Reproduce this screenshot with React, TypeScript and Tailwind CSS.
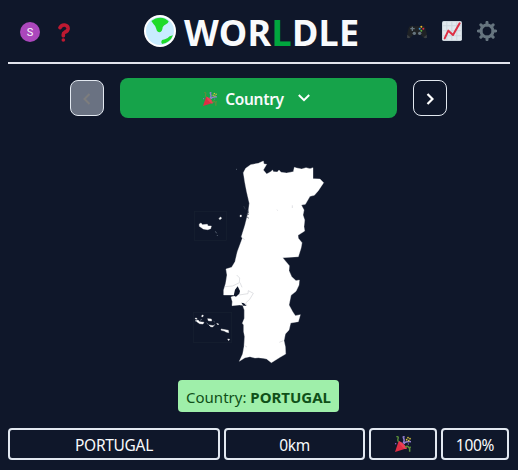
import React from "react";

function Popper({ className }: { className: string }) {
  return (
    <svg viewBox="0 0 48 48" className={className}>
      <path d="M0 48 11 15Q26 22 36 37Z" fill="#dd2e44" />
      <path d="M11 15Q26 20 36 37Q31 42 24 35Q13 26 11 15Z" fill="#ea3f56" />
      <path d="M4 2Q12 1 9 8Q7 14 11 17" stroke="#5c913b" strokeWidth="4" fill="none" />
      <path d="M24 21Q31 14 24 3M23 3 29 2M27 24Q30 15 48 17" stroke="#9580cf" strokeWidth="4.5" fill="none" />
      <path d="M31 35Q36 28 40 33Q42 38 47 32M44 36V47" stroke="#5c913b" strokeWidth="4.5" fill="none" />
      <g fill="#d9c43c"><circle cx="39" cy="5" r="2.5" /><circle cx="45" cy="8" r="2.5" /><circle cx="35" cy="11" r="2.5" /><circle cx="41" cy="14" r="2.5" /></g>
      <g fill="#9266cc"><circle cx="2" cy="23" r="2.3" /><circle cx="40" cy="24" r="2" /></g>
    </svg>
  );
}

function Globe() {
  return (
    <svg viewBox="0 0 96 96" className="h-8 w-8 shrink-0">
      <circle cx="48" cy="48" r="48" fill="#fff" />
      <circle cx="48" cy="48" r="42" fill="#c8ecff" />
      <path d="M22 18Q34 8 49 8Q65 9 74 19Q73 25 66 28Q59 31 56 37Q55 51 47 52Q38 51 37 42Q36 34 29 28Z" fill="#1fdb2a" />
      <path d="M87 61Q75 63 71 69Q63 73 54 75Q49 82 54 87Q78 84 87 61Z" fill="#1fdb2a" />
    </svg>
  );
}

function Gamepad() {
  return (
    <svg viewBox="0 0 60 42" className="mt-[2px] h-[14px] w-5">
      <path d="M6 6Q14 0 22 4H38Q47 0 54 6Q60 24 60 36Q58 42 50 38L41 29H19L10 38Q2 43 0 36Q0 22 6 6Z" fill="#1f2225" />
      <path d="M1 29 10 37 6 40 0 38ZM59 29 50 37 54 40 60 38Z" fill="#3b4045" />
      <path d="M16 5V18M10 11H23" stroke="#66757f" strokeWidth="4" />
      <circle cx="22" cy="25" r="5" fill="#66757f" />
      <circle cx="38" cy="25" r="5" fill="#66757f" />
      <circle cx="43" cy="5" r="3" fill="#e5b52b" />
      <circle cx="38" cy="11" r="3" fill="#3d91d1" />
      <circle cx="49" cy="11" r="3" fill="#dd2e44" />
      <circle cx="43" cy="17" r="3" fill="#58ab45" />
    </svg>
  );
}

function Chart() {
  return (
    <svg viewBox="0 0 60 60" className="h-5 w-5">
      <rect width="60" height="60" rx="5" fill="#ccd6dd" />
      <path d="M3 3H13V13H3ZM16 3H28V13H16ZM31 3H43V13H31ZM46 3H57V13H46ZM3 16H13V28H3ZM16 16H28V28H16ZM31 16H43V28H31ZM46 16H57V28H46ZM3 31H13V43H3ZM16 31H28V43H16ZM31 31H43V43H31ZM46 31H57V43H46ZM3 46H13V57H3ZM16 46H28V57H16ZM31 46H43V57H31ZM46 46H57V57H46Z" fill="#e1e8ed" />
      <path d="M8 52 19 29 33 42 53 7" fill="none" stroke="#dd2e44" strokeWidth="6" strokeLinecap="round" strokeLinejoin="round" />
    </svg>
  );
}

function Gear() {
  return (
    <svg viewBox="0 0 60 60" className="h-5 w-5">
      <path
        d="M30 4V12M30 48V56M4 30H12M48 30H56M11.6 11.6 17 17M43 43 48.4 48.4M48.4 11.6 43 17M17 43 11.6 48.4"
        stroke="#66757f"
        strokeWidth="9"
        strokeLinecap="round"
      />
      <circle cx="30" cy="30" r="18" fill="none" stroke="#66757f" strokeWidth="9" />
    </svg>
  );
}

function CountryMap() {
  return (
    <svg viewBox="0 0 480 660" className="h-[220px] w-40">
      <path
        d="M190 68 197 55 212 44 235 40 250 33 252 42 260 43 250 60 260 72 272 65 278 60 280 65 292 66 297 60 303 67 320 69 340 65 343 52 350 54 365 57 378 53 390 56 399 53 399 86 420 87 431 98 415 122 403 136 390 139 376 163 364 165 372 180 369 195 374 210 372 230 374 243 354 256 355 265 366 278 363 295 355 320 308 323 328 347 327 362 335 380 348 392 358 390 357 405 348 424 333 436 327 465 338 485 346 497 361 494 355 515 332 519 327 540 316 552 312 572 316 590 317 612 300 622 274 638 260 627 250 625 235 623 225 624 210 620 195 623 178 634 188 612 192 590 194 560 191 545 191 525 187 520 193 505 193 480 188 466 178 465 156 467 157 455 153 441 165 437 160 435 131 435 131 420 137 400 141 375 138 357 155 352 165 335 172 305 187 265 184 260 195 225 205 185 208 160 200 125 195 100Z"
        fill="#fff"
        stroke="#fff"
        strokeWidth="1"
      />
      <path d="M161 437 165 419 173 409 180 423 178 431 168 440ZM184 458 192 460 200 467 190 467Z" fill="#0f172a" />
      <path d="M135 410 158 408 178 398 179 384 170 375M180 398 186 412M177 435 204 431 205 422 220 430 209 448 197 459 200 467M298 577 310 572M194 587 201 591M337 166V174M291 179 293 182M187 264 194 269" fill="none" stroke="#d0d2d6" strokeWidth="2" />
      <path d="M191 168 196 178M199 193H207M198 199 207 205M203 180 206 190" stroke="#3b4252" strokeWidth="2" />
      <g fill="none" stroke="#172130" strokeWidth="2">
        <rect x="43" y="184" width="96" height="87" />
        <rect x="40" y="487" width="115" height="90" />
      </g>
      <path d="M58 222 63 219 67 224 82 223 84 228 94 228 92 236 83 239 70 237 58 229ZM117 206 121 201 125 204 120 209ZM180 196 184 195 184 200 180 200ZM46 504 51 505 50 508 46 507ZM66 495 70 496 69 500 65 500ZM46 512 54 510 59 515 72 517 69 522 59 521ZM83 506 94 507 95 513 85 512ZM87 525 100 527 104 524 98 531 92 530ZM110 520 116 522 114 525ZM123 537 145 541 146 548 138 546 133 543 124 541ZM143 567 149 568 146 572Z" fill="#fff" stroke="#fff" strokeWidth="1.2" />
      <path d="M106 244 110 250M111 255 113 258M168 58H171M80 518 86 525M60 511 66 508M46 514 51 515M101 514 104 516" stroke="#778391" strokeWidth="2" />
    </svg>
  );
}

export default function App() {
  return (
    <main className="h-[470px] w-[518px] overflow-hidden bg-[#0f172a] pl-2 font-['Noto_Sans','Open_Sans',sans-serif] text-slate-50">
      <header className="flex h-16 w-[502px] items-center border-b-2 border-[#e2e4ed]">
        <div className="flex w-[136px] items-center pt-[2px] pl-3">
          <div className="flex h-5 w-5 items-center justify-center rounded-full bg-[#ab47bc] font-['Roboto',sans-serif] text-[11px] leading-none">S</div>
          <svg viewBox="0 0 36 57" className="ml-[18px] h-[19px] w-3">
            <path d="M6 14Q10 5 20 6Q31 8 30 18Q29 25 20 28Q15 30 16 38" fill="none" stroke="#be1931" strokeWidth="11" strokeLinecap="round" />
            <circle cx="16" cy="51" r="5.5" fill="#be1931" />
          </svg>
        </div>
        <h1 className="flex items-center gap-2 whitespace-nowrap">
          <Globe />
          <span className="w-[176px] pt-1 text-4xl leading-10 font-bold tracking-[0.3px]">WOR<span className="text-green-600">L</span>DLE</span>
        </h1>
        <div className="ml-auto flex items-center gap-[15px] pr-[13px]">
          <Gamepad />
          <Chart />
          <Gear />
        </div>
      </header>
      <nav className="flex h-[54px] items-end pl-[62px]">
        <button className="mb-[2px] flex h-9 w-[34px] items-center justify-center rounded-lg border border-slate-200 bg-gray-500">
          <svg viewBox="0 0 8 12" className="mt-px h-3 w-2" fill="none" stroke="#7d7d7d" strokeWidth="2"><path d="M6.5 1 1.5 6 6.5 11" /></svg>
        </button>
        <button className="ml-4 flex h-10 w-[277px] items-center rounded-lg bg-[#16a34a] pl-[83px]">
          <Popper className="mt-[2px] h-[14px] w-[14px] shrink-0" />
          <span className="ml-[7px] w-[61px] pt-1 text-[15.5px] font-semibold tracking-[-0.3px] whitespace-nowrap">Country</span>
          <svg viewBox="0 0 12 8" className="ml-[13px] h-2 w-3" fill="none" stroke="#fff" strokeWidth="2"><path d="M.8 1 6 6.2 11.2 1" /></svg>
        </button>
        <button className="mb-[2px] ml-4 flex h-9 w-[34px] items-center justify-center rounded-lg border border-slate-200">
          <svg viewBox="0 0 8 12" className="mt-px h-3 w-2" fill="none" stroke="#fff" strokeWidth="2.2"><path d="M1.5 1 6.5 6 1.5 11" /></svg>
        </button>
      </nav>
      <section className="flex h-[262px] items-end pl-[172px] pb-[10px]">
        <CountryMap />
      </section>
      <div className="ml-[170px] flex h-8 w-[161px] items-center justify-center rounded bg-[#9fefaa] pt-[2px] text-[15px] whitespace-pre text-[#0f5018]">
        <span>Country: </span>
        <b className="font-bold">PORTUGAL</b>
      </div>
      <div className="mt-4 flex h-8 gap-1 text-[15.5px] tracking-[-0.3px] text-slate-50">
        <div className="flex w-[212px] items-center justify-center rounded border-2 border-slate-200 pt-1">PORTUGAL</div>
        <div className="flex w-[141px] items-center justify-center rounded border-2 border-slate-200 pt-1">0km</div>
        <div className="flex w-[68px] items-center justify-center rounded border-2 border-slate-200"><Popper className="h-4 w-4" /></div>
        <div className="flex w-[68px] items-center justify-center rounded border-2 border-slate-200 pt-1">100%</div>
      </div>
    </main>
  );
}
